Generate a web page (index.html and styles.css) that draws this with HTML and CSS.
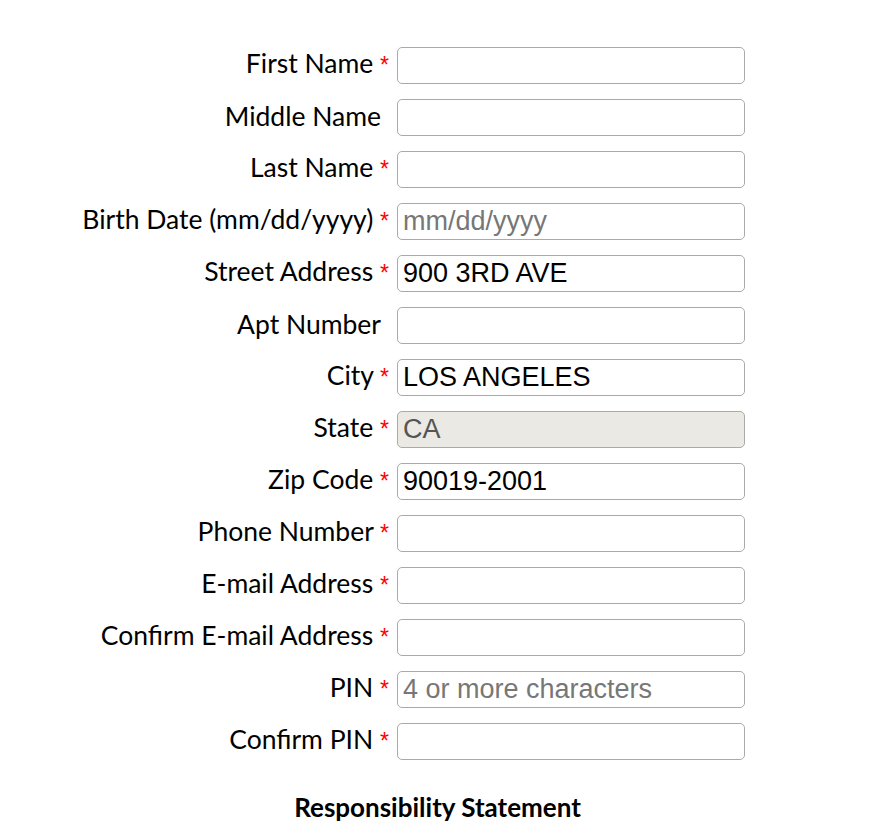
FILE: index.html
```html
<!DOCTYPE html>
<html lang="en">

<head>
    <meta charset="UTF-8">
    <meta name="viewport" content="width=device-width, initial-scale=1.0">
    <title>Create Account</title>
    <link rel="stylesheet" href="styles.css">
</head>

<body>
    <form class="account-form" id="accountForm">
        <label class="field-label" for="firstName">First Name <span class="req">*</span></label>
        <input class="field" type="text" id="firstName">

        <label class="field-label optional" for="middleName">Middle Name</label>
        <input class="field" type="text" id="middleName">

        <label class="field-label" for="lastName">Last Name <span class="req">*</span></label>
        <input class="field" type="text" id="lastName">

        <label class="field-label" for="birthDate">Birth Date (mm/dd/yyyy) <span class="req">*</span></label>
        <input class="field" type="text" id="birthDate" placeholder="mm/dd/yyyy">

        <label class="field-label" for="street">Street Address <span class="req">*</span></label>
        <input class="field" type="text" id="street" value="900 3RD AVE">

        <label class="field-label optional" for="apt">Apt Number</label>
        <input class="field" type="text" id="apt">

        <label class="field-label" for="city">City <span class="req">*</span></label>
        <input class="field" type="text" id="city" value="LOS ANGELES">

        <label class="field-label" for="state">State <span class="req">*</span></label>
        <input class="field" type="text" id="state" value="CA" disabled>

        <label class="field-label" for="zip">Zip Code <span class="req">*</span></label>
        <input class="field" type="text" id="zip" value="90019-2001">

        <label class="field-label" for="phone">Phone Number <span class="req">*</span></label>
        <input class="field" type="tel" id="phone">

        <label class="field-label" for="email">E-mail Address <span class="req">*</span></label>
        <input class="field" type="email" id="email">

        <label class="field-label" for="emailConfirm">Confirm E-mail Address <span class="req">*</span></label>
        <input class="field" type="email" id="emailConfirm">

        <label class="field-label" for="pin">PIN <span class="req">*</span></label>
        <input class="field" type="text" id="pin" placeholder="4 or more characters">

        <label class="field-label" for="pinConfirm">Confirm PIN <span class="req">*</span></label>
        <input class="field" type="text" id="pinConfirm">
    </form>

    <h2 class="statement-title">Responsibility Statement</h2>
</body>

</html>
```

FILE: styles.css
```css
body {
    margin: 0;
    font-family: Lato, "Noto Sans", sans-serif;
    color: #000;
    background: #fff;
}

.account-form {
    display: grid;
    grid-template-columns: 389px 348px;
    column-gap: 8px;
    row-gap: 15px;
    align-items: center;
    padding-top: 47px;
}

.field-label {
    text-align: right;
    font-size: 26.5px;
    line-height: 30px;
    white-space: nowrap;
    margin-top: -3px;
}

.field-label.optional {
    padding-right: 8px;
}

/* required marker */
.req {
    color: #f00;
    font-family: "Liberation Sans", Arial, sans-serif;
    font-size: 23px;
}

.field {
    box-sizing: border-box;
    height: 37px;
    width: 100%;
    margin: 0;
    padding: 0 5px;
    border: 1px solid #aaa;
    border-radius: 5px;
    font-family: "Liberation Sans", Arial, sans-serif;
    font-size: 27px;
    color: #000;
    background: #fff;
}

.field::placeholder {
    color: #777;
}

.field:disabled {
    background: #eae9e3;
    color: #555;
}

.statement-title {
    width: 875px;
    margin: 31px 0 0;
    text-align: center;
    font-size: 26px;
    font-weight: bold;
}
```
